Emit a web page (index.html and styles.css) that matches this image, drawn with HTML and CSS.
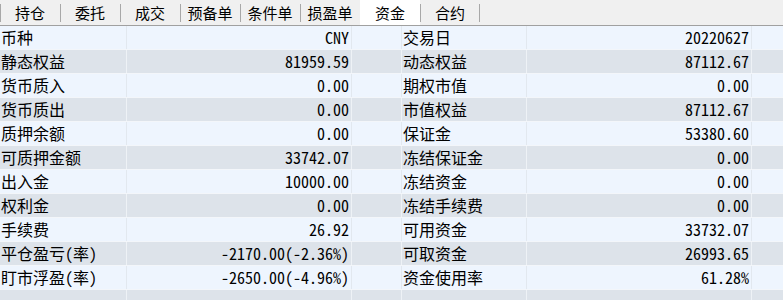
FILE: index.html
```html
<!DOCTYPE html>
<html lang="zh-CN">
<head>
<meta charset="utf-8">
<title>资金</title>
<link rel="stylesheet" href="styles.css">
</head>
<body>
<div class="tabs">
  <div class="tab">持仓</div>
  <div class="tab">委托</div>
  <div class="tab">成交</div>
  <div class="tab">预备单</div>
  <div class="tab">条件单</div>
  <div class="tab">损盈单</div>
  <div class="tab active">资金</div>
  <div class="tab">合约</div>
</div>
<div class="table">
  <div class="row"><div class="c lbl">币种</div><div class="c val">CNY</div><div class="c gap"></div><div class="c lbl">交易日</div><div class="c val">20220627</div><div class="c end"></div></div>
  <div class="row"><div class="c lbl">静态权益</div><div class="c val">81959.59</div><div class="c gap"></div><div class="c lbl">动态权益</div><div class="c val">87112.67</div><div class="c end"></div></div>
  <div class="row"><div class="c lbl">货币质入</div><div class="c val">0.00</div><div class="c gap"></div><div class="c lbl">期权市值</div><div class="c val">0.00</div><div class="c end"></div></div>
  <div class="row"><div class="c lbl">货币质出</div><div class="c val">0.00</div><div class="c gap"></div><div class="c lbl">市值权益</div><div class="c val">87112.67</div><div class="c end"></div></div>
  <div class="row"><div class="c lbl">质押余额</div><div class="c val">0.00</div><div class="c gap"></div><div class="c lbl">保证金</div><div class="c val">53380.60</div><div class="c end"></div></div>
  <div class="row"><div class="c lbl">可质押金额</div><div class="c val">33742.07</div><div class="c gap"></div><div class="c lbl">冻结保证金</div><div class="c val">0.00</div><div class="c end"></div></div>
  <div class="row"><div class="c lbl">出入金</div><div class="c val">10000.00</div><div class="c gap"></div><div class="c lbl">冻结资金</div><div class="c val">0.00</div><div class="c end"></div></div>
  <div class="row"><div class="c lbl">权利金</div><div class="c val">0.00</div><div class="c gap"></div><div class="c lbl">冻结手续费</div><div class="c val">0.00</div><div class="c end"></div></div>
  <div class="row"><div class="c lbl">手续费</div><div class="c val">26.92</div><div class="c gap"></div><div class="c lbl">可用资金</div><div class="c val">33732.07</div><div class="c end"></div></div>
  <div class="row"><div class="c lbl">平仓盈亏(率)</div><div class="c val">-2170.00(-2.36%)</div><div class="c gap"></div><div class="c lbl">可取资金</div><div class="c val">26993.65</div><div class="c end"></div></div>
  <div class="row"><div class="c lbl">盯市浮盈(率)</div><div class="c val">-2650.00(-4.96%)</div><div class="c gap"></div><div class="c lbl">资金使用率</div><div class="c val">61.28%</div><div class="c end"></div></div>
  <div class="row"><div class="c lbl"></div><div class="c val"></div><div class="c gap"></div><div class="c lbl"></div><div class="c val"></div><div class="c end"></div></div>
</div>
</body>
</html>
```
FILE: styles.css
```css
* { box-sizing: border-box; }
html, body { margin: 0; padding: 0; }
body {
  width: 783px;
  height: 300px;
  overflow: hidden;
  background: #eef5fe;
  font-family: "Noto Sans Mono CJK SC", "Noto Sans CJK SC", "Liberation Mono", monospace;
  color: #000;
}
.tabs {
  display: flex;
  height: 26px;
  background: #f0f0f0;
  border-bottom: 1px solid #a0a0a0;
}
.tab {
  position: relative;
  width: 60px;
  height: 25px;
  font-size: 15px;
  line-height: 25px;
  text-align: center;
  color: #000;
}
.tab::before {
  content: "";
  position: absolute;
  left: 0;
  top: 4px;
  height: 18px;
  width: 1px;
  background: #a8a8a8;
}
.tab:last-child::after {
  content: "";
  position: absolute;
  right: 0;
  top: 4px;
  height: 18px;
  width: 1px;
  background: #a8a8a8;
}
.tab.active { background: #fff; }
.tab.active::before { display: none; }
.table { display: flex; flex-direction: column; }
.row {
  display: grid;
  grid-template-columns: 127px 225px 50px 125px 225px 1fr;
  height: 24px;
  background: #eef5fe;
  border-bottom: 1px solid #f3f6fa;
}
.row:nth-child(even) { background: #dde3ea; }
.c {
  border-right: 1px solid #e2e8ef;
  font-size: 16px;
  line-height: 23px;
  white-space: nowrap;
  overflow: hidden;
}
.row:nth-child(even) .c { border-right-color: #eef2f6; }
.lbl { padding-left: 1px; }
.val { text-align: right; padding-right: 2px; }
.end { border-right: none; }
```
